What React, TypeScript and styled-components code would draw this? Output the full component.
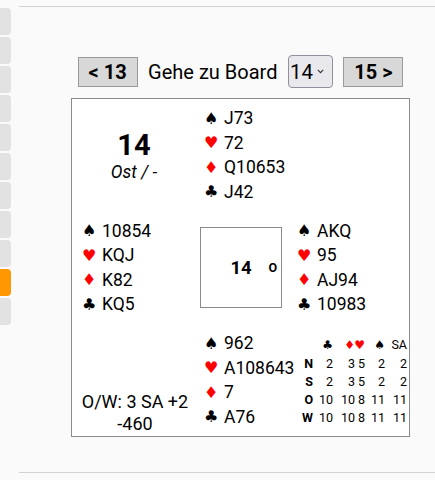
import React from "react";
import styled, { createGlobalStyle } from "styled-components";

type Suit = "S" | "H" | "D" | "C";

const SUIT_GLYPH: Record<Suit, string> = { S: "♠", H: "♥", D: "♦", C: "♣" };
const SUIT_ORDER: Suit[] = ["S", "H", "D", "C"];

const HANDS: Record<string, Record<Suit, string>> = {
  north: { S: "J73", H: "72", D: "Q10653", C: "J42" },
  west: { S: "10854", H: "KQJ", D: "K82", C: "KQ5" },
  east: { S: "AKQ", H: "95", D: "AJ94", C: "10983" },
  south: { S: "962", H: "A108643", D: "7", C: "A76" },
};

// double dummy tricks: ♣ ♦ ♥ ♠ SA
const PAR_ROWS: [string, string[]][] = [
  ["N", ["2", "3", "5", "2", "2"]],
  ["S", ["2", "3", "5", "2", "2"]],
  ["O", ["10", "10", "8", "11", "11"]],
  ["W", ["10", "10", "8", "11", "11"]],
];

const GlobalStyle = createGlobalStyle`
  html, body {
    margin: 0;
    padding: 0;
    background: #fafafa;
  }
  body {
    font-family: Roboto, "Liberation Sans", sans-serif;
    color: #000;
  }
`;

const Page = styled.div`
  display: flex;
  min-height: 480px;
`;

const Sidebar = styled.nav`
  display: flex;
  flex-direction: column;
  gap: 2px;
  padding-top: 8px;
  width: 11px;
  flex-shrink: 0;
`;

const Tab = styled.div<{ $active?: boolean }>`
  height: 27px;
  border-radius: 0 4px 4px 0;
  background: ${({ $active }) => ($active ? "#ff9800" : "#e2e2e2")};
`;

const Main = styled.main`
  flex: 1;
  margin-left: 8px;
  display: flex;
  flex-direction: column;
`;

const Rule = styled.hr<{ $top: number }>`
  margin: ${({ $top }) => $top}px 0 0;
  border: none;
  height: 1px;
  background: #d2d2d2;
`;

const Content = styled.div`
  width: 339px;
  margin-left: 52px;
  display: flex;
  flex-direction: column;
  align-items: center;
`;

const Nav = styled.div`
  margin-top: 48px;
  display: flex;
  align-items: center;
  gap: 10.5px;
`;

const NavButton = styled.button`
  width: 60px;
  height: 30px;
  padding: 0;
  border: 1px solid #9a9a9a;
  background: #d8d8d8;
  font-family: Roboto, "Liberation Sans", sans-serif;
  font-weight: bold;
  font-size: 20px;
  color: #000;
`;

const NavLabel = styled.span`
  font-size: 20px;
`;

const SelectWrap = styled.div`
  position: relative;
  width: 45px;
  height: 33px;
`;

const Select = styled.select`
  appearance: none;
  width: 100%;
  height: 100%;
  margin: 0;
  padding: 0 0 0 1px;
  border: 1px solid #8f8f9d;
  border-radius: 4px;
  background: #e9e9ed;
  font-family: Roboto, "Liberation Sans", sans-serif;
  font-size: 20.5px;
  color: #000;
`;

const Chevron = styled.svg`
  position: absolute;
  left: 29px;
  top: 14px;
  pointer-events: none;
`;

const Board = styled.div`
  margin-top: 10px;
  width: 339px;
  height: 339px;
  box-sizing: border-box;
  border: 1px solid #8a8a8a;
  background: #fff;
  display: grid;
  grid-template-columns: 128px 82px 127px;
  grid-template-rows: 98px 98px 1fr;
  row-gap: 14.5px;
  padding-top: 7px;
  grid-template-areas:
    "info north ."
    "west compass east"
    "result south par";
`;

const Info = styled.div`
  grid-area: info;
  display: flex;
  flex-direction: column;
  align-items: center;
  justify-content: center;
  padding-right: 4px;
`;

const BoardNo = styled.div`
  font-size: 29px;
  font-weight: bold;
  line-height: 34px;
`;

const Dealer = styled.div`
  font-size: 17.5px;
  font-style: italic;
  line-height: 21px;
`;

const HandBox = styled.div<{ $area: string; $pad: number }>`
  grid-area: ${({ $area }) => $area};
  padding-left: ${({ $pad }) => $pad}px;
  align-self: start;
  white-space: nowrap;
`;

const HandLine = styled.div`
  display: flex;
  align-items: center;
  height: 24.5px;
  font-size: 17.5px;
`;

const SuitMark = styled.span<{ $red: boolean; $size?: number }>`
  font-family: "DejaVu Sans", sans-serif;
  font-size: ${({ $size }) => $size ?? 16}px;
  color: ${({ $red }) => ($red ? "#ff0000" : "#000")};
`;

const SuitCell = styled.span`
  width: 20px;
  flex-shrink: 0;
  display: inline-flex;
`;

const Compass = styled.div`
  grid-area: compass;
  align-self: center;
  height: 81px;
  box-sizing: border-box;
  border: 1px solid #8a8a8a;
  display: grid;
  grid-template-columns: 1fr auto 1fr;
  align-items: center;
`;

const CompassNo = styled.span`
  grid-column: 2;
  font-size: 18.5px;
  font-weight: bold;
`;

const CompassDealer = styled.span`
  grid-column: 3;
  justify-self: end;
  margin-right: 4px;
  font-size: 12.5px;
  font-weight: bold;
`;

const Result = styled.div`
  grid-area: result;
  align-self: end;
  text-align: center;
  font-size: 18px;
  line-height: 21.7px;
  padding-bottom: 1.5px;
  padding-right: 2px;
`;

const ParTable = styled.div`
  grid-area: par;
  align-self: end;
  justify-self: end;
  margin: 0 2px 9px 0;
  display: grid;
  grid-template-columns: 11px 20px 22px 10px 20px 22px;
  grid-auto-rows: 18.25px;
  justify-items: end;
  align-items: center;
  font-size: 12.5px;
`;

const ParLabel = styled.span`
  font-weight: bold;
`;

function Hand({ name, area, pad }: { name: string; area: string; pad: number }) {
  const hand = HANDS[name];
  return (
    <HandBox $area={area} $pad={pad}>
      {SUIT_ORDER.map((s) => (
        <HandLine key={s}>
          <SuitCell>
            <SuitMark $red={s === "H" || s === "D"}>{SUIT_GLYPH[s]}</SuitMark>
          </SuitCell>
          {hand[s]}
        </HandLine>
      ))}
    </HandBox>
  );
}

export default function App() {
  const tabs = Array.from({ length: 11 }, (_, i) => i);
  const header: Suit[] = ["C", "D", "H", "S"];

  return (
    <>
      <GlobalStyle />
      <Page>
        <Sidebar>
          {tabs.map((i) => (
            <Tab key={i} $active={i === 9} />
          ))}
        </Sidebar>
        <Main>
          <Rule $top={6} />
          <Content>
            <Nav>
              <NavButton>&lt; 13</NavButton>
              <NavLabel>Gehe zu Board</NavLabel>
              <SelectWrap>
                <Select defaultValue="14">
                  {Array.from({ length: 32 }, (_, i) => (
                    <option key={i} value={String(i + 1)}>
                      {i + 1}
                    </option>
                  ))}
                </Select>
                <Chevron width="7" height="5" viewBox="0 0 7 5">
                  <path d="M0.8 0.8 L3.5 3.6 L6.2 0.8" fill="none" stroke="#333" strokeWidth="1.1" />
                </Chevron>
              </SelectWrap>
              <NavButton>15 &gt;</NavButton>
            </Nav>
            <Board>
              <Info>
                <BoardNo>14</BoardNo>
                <Dealer>Ost / -</Dealer>
              </Info>
              <Hand name="north" area="north" pad={4} />
              <Hand name="west" area="west" pad={10} />
              <Compass>
                <CompassNo>14</CompassNo>
                <CompassDealer>O</CompassDealer>
              </Compass>
              <Hand name="east" area="east" pad={15} />
              <Result>
                O/W: 3 SA +2
                <br />
                -460
              </Result>
              <Hand name="south" area="south" pad={4} />
              <ParTable>
                <span />
                {header.map((s) => (
                  <SuitMark key={s} $red={s === "H" || s === "D"} $size={12}>
                    {SUIT_GLYPH[s]}
                  </SuitMark>
                ))}
                <span>SA</span>
                {PAR_ROWS.map(([who, tricks]) => (
                  <React.Fragment key={who}>
                    <ParLabel>{who}</ParLabel>
                    {tricks.map((t, j) => (
                      <span key={j}>{t}</span>
                    ))}
                  </React.Fragment>
                ))}
              </ParTable>
            </Board>
          </Content>
          <Rule $top={35} />
        </Main>
      </Page>
    </>
  );
}
